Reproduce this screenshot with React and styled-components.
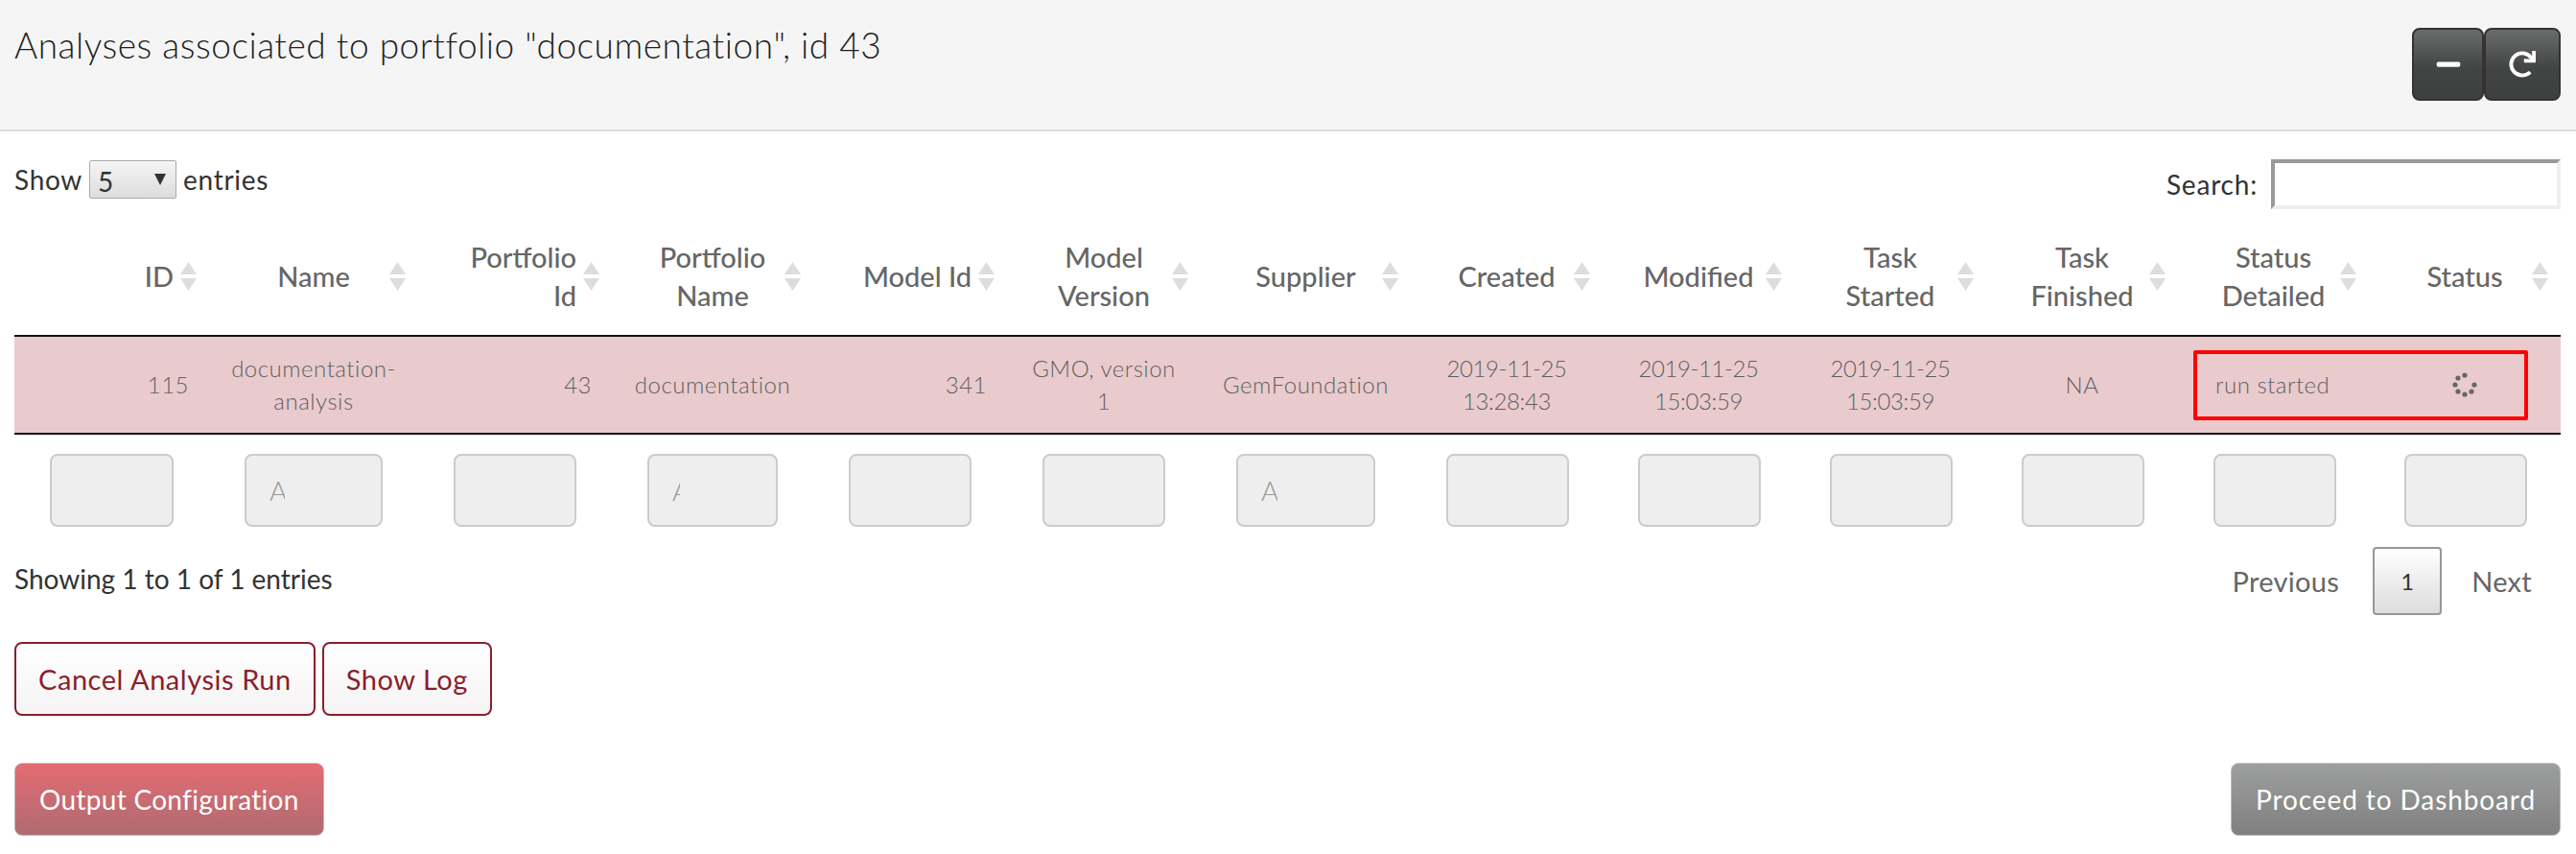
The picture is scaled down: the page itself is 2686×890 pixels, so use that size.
import React from 'react';
import styled, { createGlobalStyle } from 'styled-components';
import { FaMinus, FaRedo } from 'react-icons/fa';

const columns = [
  { title: 'ID', width: 203, align: 'right' },
  { title: 'Name', width: 218 },
  { title: 'Portfolio\nId', width: 202, align: 'right' },
  { title: 'Portfolio\nName', width: 210 },
  { title: 'Model Id', width: 202, align: 'right' },
  { title: 'Model\nVersion', width: 202 },
  { title: 'Supplier', width: 219 },
  { title: 'Created', width: 200, numeric: true },
  { title: 'Modified', width: 200, numeric: true },
  { title: 'Task\nStarted', width: 200, numeric: true },
  { title: 'Task\nFinished', width: 200 },
  { title: 'Status\nDetailed', width: 199 },
  { title: 'Status', width: 200 },
];

const filters = ['', 'All', '', 'All', '', '', 'All', '', '', '', '', '', ''];

const row = [
  '115',
  'documentation-\nanalysis',
  '43',
  'documentation',
  '341',
  'GMO, version\n1',
  'GemFoundation',
  '2019-11-25\n13:28:43',
  '2019-11-25\n15:03:59',
  '2019-11-25\n15:03:59',
  'NA',
];

const spinnerDots = [
  [0, -10],
  [-7, -7],
  [-10, 0],
  [-7, 7],
  [0, 10],
  [7, 7],
  [10, 0],
];

const SortIcon = () => (
  <SortSvg viewBox="0 0 17 30">
    <path d="M8.5 0L17 13H0z" />
    <path d="M0 17H17L8.5 30z" />
  </SortSvg>
);

const Spinner = () => (
  <svg width="28" height="28" viewBox="-14 -14 28 28">
    {spinnerDots.map(([x, y]) => (
      <circle key={`${x}-${y}`} cx={x} cy={y} r="2.6" fill="#666" />
    ))}
  </svg>
);

const App = () => {
  return (
    <Page>
      <GlobalStyle />
      <Panel>
        <Title>Analyses associated to portfolio "documentation", id 43</Title>
        <PanelTools>
          <DarkButton $width={75}>
            <FaMinus size={28} />
          </DarkButton>
          <DarkButton $width={80}>
            <FaRedo size={28} />
          </DarkButton>
        </PanelTools>
      </Panel>

      <Controls>
        <LengthLabel>
          Show
          <SelectWrap>
            <LengthSelect defaultValue="5">
              <option>5</option>
              <option>10</option>
            </LengthSelect>
          </SelectWrap>
          entries
        </LengthLabel>
        <SearchLabel>
          Search:
          <SearchInput type="text" />
        </SearchLabel>
      </Controls>

      <Table>
        <colgroup>
          {columns.map((col) => (
            <col key={col.title} style={{ width: col.width }} />
          ))}
        </colgroup>
        <thead>
          <tr>
            {columns.map((col) => (
              <HeadCell key={col.title} $align={col.align}>
                {col.title}
                <SortIcon />
              </HeadCell>
            ))}
          </tr>
        </thead>
        <tbody>
          <tr>
            {row.map((value, i) => (
              <BodyCell key={i} $align={columns[i].align} $numeric={columns[i].numeric}>
                {value}
              </BodyCell>
            ))}
            <DetailCell>
              run started
              <StatusBox />
            </DetailCell>
            <BodyCell>
              <SpinnerWrap>
                <Spinner />
              </SpinnerWrap>
            </BodyCell>
          </tr>
        </tbody>
        <tfoot>
          <tr>
            {filters.map((placeholder, i) => (
              <FilterCell key={i}>
                <FilterInput type="text" placeholder={placeholder} />
              </FilterCell>
            ))}
          </tr>
        </tfoot>
      </Table>

      <InfoRow>
        <InfoText>Showing 1 to 1 of 1 entries</InfoText>
        <Pager>
          <PagerLink>Previous</PagerLink>
          <PageButton>1</PageButton>
          <PagerLink>Next</PagerLink>
        </Pager>
      </InfoRow>

      <ActionRow>
        <OutlineButton>Cancel Analysis Run</OutlineButton>
        <OutlineButton>Show Log</OutlineButton>
      </ActionRow>

      <BottomRow>
        <MutedButton $from="#e56b72" $to="#ad6c72" $spacing={0.3}>
          Output Configuration
        </MutedButton>
        <MutedButton $from="#9d9f9e" $to="#7f807f" $spacing={0.9}>
          Proceed to Dashboard
        </MutedButton>
      </BottomRow>
    </Page>
  );
};

export default App;

const GlobalStyle = createGlobalStyle`
  * {
    box-sizing: border-box;
  }

  body {
    margin: 0;
    background: #fff;
    font-family: 'Lato', 'Liberation Sans', sans-serif;
    color: #333;
  }
`;

const Page = styled.div`
  width: 2686px;
  height: 890px;
  overflow: hidden;
`;

const Panel = styled.div`
  display: flex;
  justify-content: space-between;
  height: 137px;
  padding: 29px 16px 0 15px;
  background: #f5f5f5;
  border-bottom: 2px solid #ddd;
`;

const Title = styled.h1`
  margin: 0;
  font-size: 37px;
  font-weight: 300;
  line-height: 36px;
  letter-spacing: 0.52px;
  color: #1f1f1f;
`;

const PanelTools = styled.div`
  display: flex;
  height: 76px;
`;

const DarkButton = styled.button`
  display: flex;
  align-items: center;
  justify-content: center;
  width: ${(p) => p.$width}px;
  height: 76px;
  padding: 0;
  color: #fff;
  background: linear-gradient(#6b6d6d, #434544 55%, #3e403f);
  border: 2px solid #333;
  border-radius: 8px;
`;

const Controls = styled.div`
  display: flex;
  justify-content: space-between;
  align-items: flex-start;
  padding: 30px 16px 0 15px;
  height: 82px;
`;

const LengthLabel = styled.label`
  display: flex;
  align-items: center;
  gap: 7px;
  height: 40px;
  font-size: 28px;
  letter-spacing: 0.7px;
`;

const SelectWrap = styled.span`
  position: relative;
  display: block;

  &::after {
    content: '';
    position: absolute;
    top: 14px;
    right: 11px;
    border-left: 6px solid transparent;
    border-right: 6px solid transparent;
    border-top: 12px solid #333;
  }
`;

const LengthSelect = styled.select`
  appearance: none;
  display: block;
  width: 91px;
  height: 40px;
  padding: 4px 0 0 8px;
  font-family: inherit;
  font-size: 28px;
  color: #333;
  background: linear-gradient(#f5f5f5, #dcdcdc);
  border: 1px solid #aaa;
  border-radius: 2px;
`;

const SearchLabel = styled.label`
  display: flex;
  align-items: center;
  gap: 14px;
  height: 52px;
  padding-bottom: 2px;
  font-size: 28px;
  letter-spacing: 0.8px;
`;

const SearchInput = styled.input`
  width: 302px;
  height: 52px;
  padding: 0 8px;
  background: #fff;
  border: 4px solid;
  border-color: #9a9a9a #eee #eee #9a9a9a;
`;

const Table = styled.table`
  width: 2655px;
  margin-left: 15px;
  margin-top: 8px;
  table-layout: fixed;
  border-collapse: separate;
  border-spacing: 0;
`;

const HeadCell = styled.th`
  position: relative;
  height: 122px;
  padding: 0 37px;
  font-size: 29px;
  font-weight: 500;
  line-height: 40px;
  color: #666;
  white-space: pre-line;
  text-align: ${(p) => p.$align || 'center'};
  vertical-align: middle;
`;

const SortSvg = styled.svg`
  position: absolute;
  top: 46px;
  right: 13px;
  width: 17px;
  height: 30px;
  fill: #ddd;
`;

const BodyCell = styled.td`
  height: 104px;
  padding: 0 21px;
  font-size: 24px;
  font-weight: 300;
  line-height: 34px;
  letter-spacing: ${(p) => (p.$numeric ? '-0.4px' : '0.5px')};
  color: #5f5f5f;
  white-space: pre-line;
  text-align: ${(p) => p.$align || 'center'};
  vertical-align: middle;
  background: #e9cbcd;
  border-top: 2px solid #111;
  border-bottom: 2px solid #111;
`;

const DetailCell = styled(BodyCell)`
  position: relative;
  padding-left: 39px;
  text-align: left;
`;

// the red frame runs on over the Status column next to it
const StatusBox = styled.div`
  position: absolute;
  top: 14px;
  left: 16px;
  width: 349px;
  height: 73px;
  border: 4px solid #f00;
  border-radius: 2px;
`;

const SpinnerWrap = styled.div`
  display: flex;
  justify-content: center;
`;

const FilterCell = styled.td`
  height: 116px;
  padding: 20px 37px;
  vertical-align: top;
`;

const FilterInput = styled.input`
  display: block;
  width: 100%;
  height: 76px;
  padding: 0 100px 0 24px;
  font-family: inherit;
  font-size: 28px;
  font-weight: 300;
  background: #eee;
  border: 2px solid #ccc;
  border-radius: 8px;

  &::placeholder {
    color: #999;
  }
`;

const InfoRow = styled.div`
  display: flex;
  justify-content: space-between;
  align-items: center;
  height: 71px;
  margin-top: 1px;
  padding: 0 46px 0 15px;
`;

const InfoText = styled.div`
  padding-bottom: 6px;
  font-size: 28px;
  font-weight: 400;
`;

const Pager = styled.div`
  display: flex;
  align-items: center;
`;

const PagerLink = styled.span`
  font-size: 29px;
  font-weight: 400;
  letter-spacing: 0.3px;
  color: #666;
`;

const PageButton = styled.button`
  width: 72px;
  height: 71px;
  margin: 0 31px 0 35px;
  font-family: inherit;
  font-size: 24px;
  color: #333;
  background: linear-gradient(#fff, #dcdcdc);
  border: 2px solid #979797;
  border-radius: 4px;
`;

const ActionRow = styled.div`
  display: flex;
  gap: 7px;
  margin-top: 28px;
  padding-left: 15px;
`;

const OutlineButton = styled.button`
  height: 77px;
  padding: 0 23px;
  font-family: inherit;
  font-size: 29px;
  letter-spacing: 0.55px;
  color: #8b1e2b;
  background: linear-gradient(#fff, #f5f3f4);
  border: 2px solid #8b1e2b;
  border-radius: 8px;
`;

const BottomRow = styled.div`
  display: flex;
  justify-content: space-between;
  margin-top: 49px;
  padding: 0 16px 0 15px;
`;

const MutedButton = styled.button`
  height: 76px;
  padding: 0 25px;
  font-family: inherit;
  font-size: 28px;
  letter-spacing: ${(p) => p.$spacing}px;
  color: #fff;
  background: linear-gradient(${(p) => p.$from}, ${(p) => p.$to});
  border: 1px solid #bbb;
  border-radius: 8px;
`;
